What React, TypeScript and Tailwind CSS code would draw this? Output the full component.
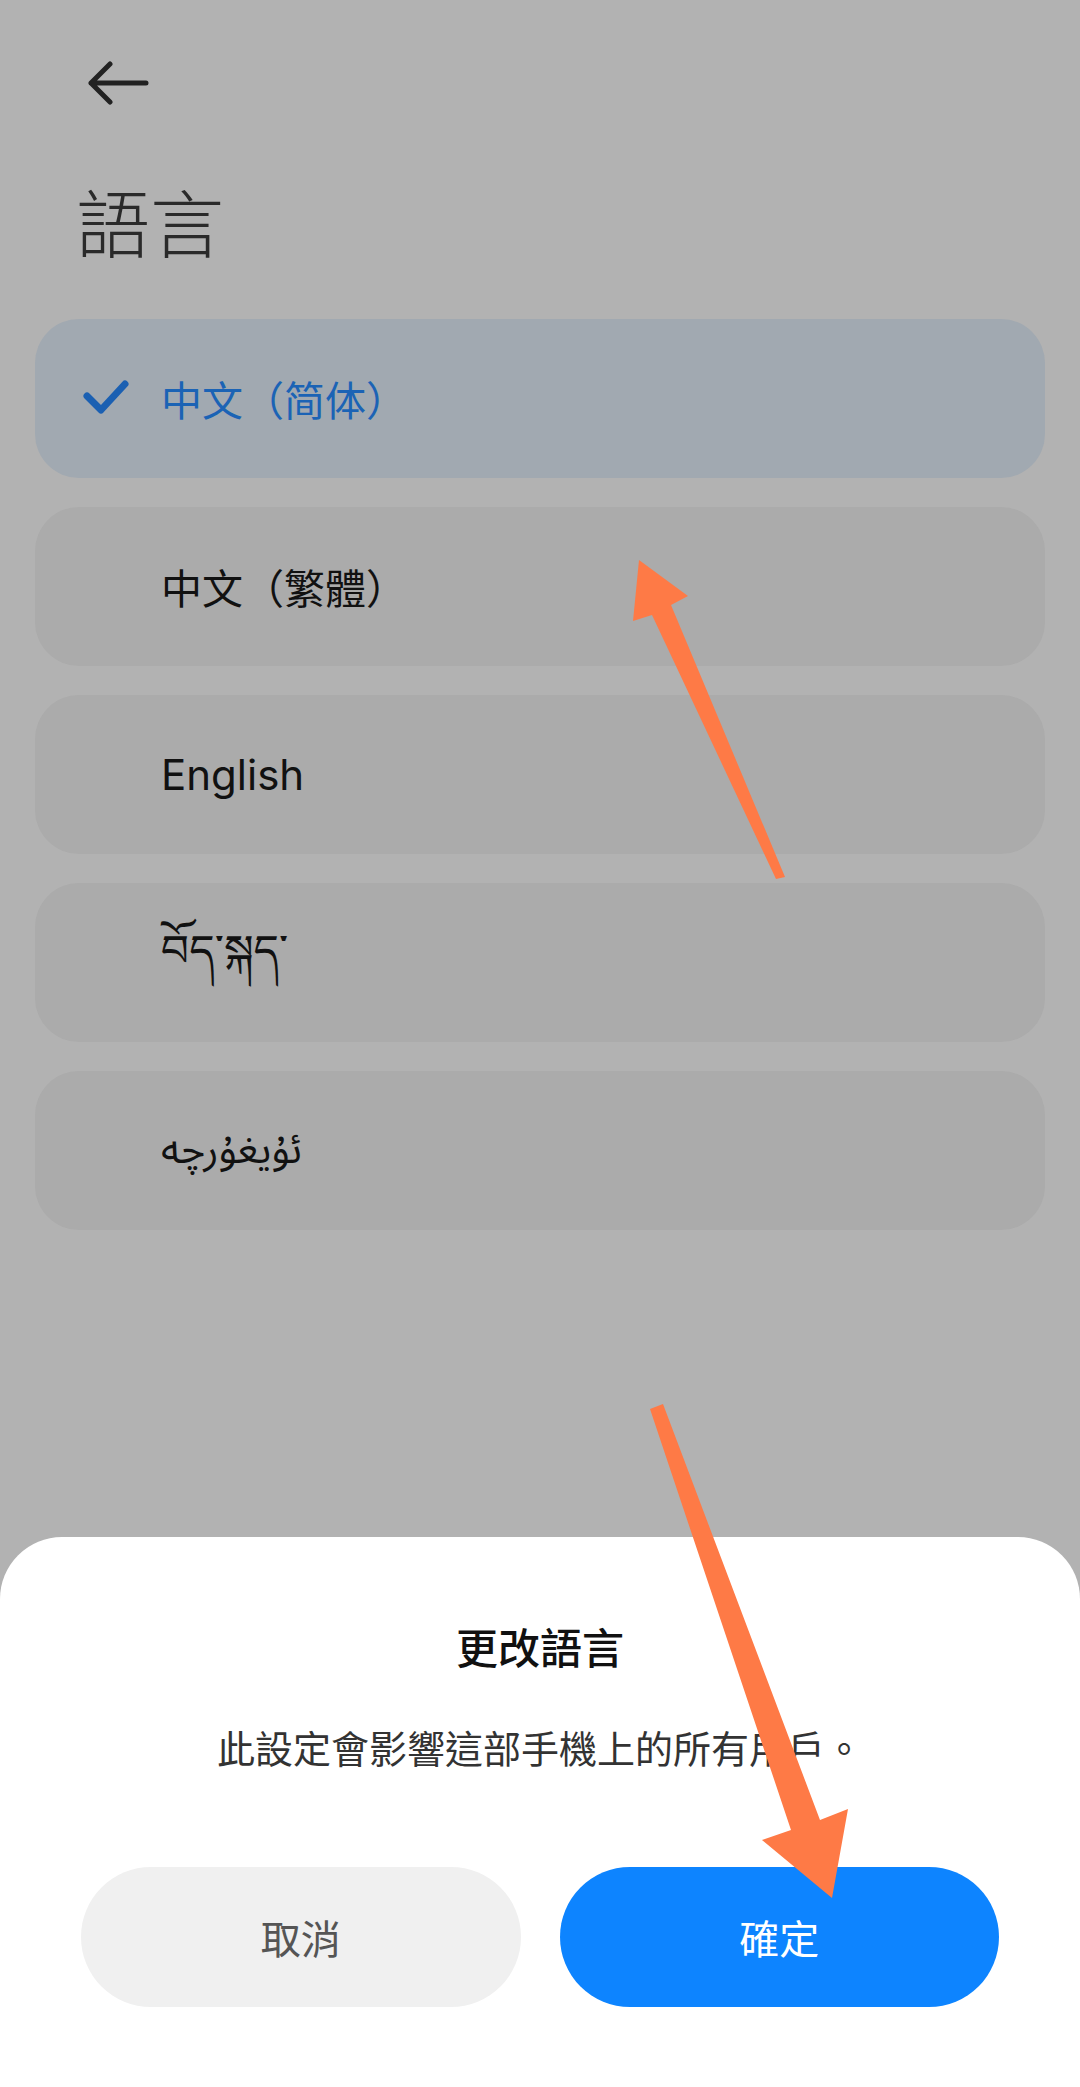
import React from "react";

const languages = [
  { label: "中文（简体）", selected: true, font: "cjk-sc" },
  { label: "中文（繁體）", selected: false, font: "cjk" },
  { label: "English", selected: false, font: "latin" },
  { label: "བོད་སྐད་", selected: false, font: "tibetan" },
  { label: "ئۇيغۇرچە", selected: false, font: "arabic" },
];

const CheckIcon = () => (
  <svg width="48" height="40" viewBox="0 0 48 40" fill="none">
    <path
      d="M4 17 L18 31 L42 5"
      stroke="#1b60b2"
      strokeWidth="7"
      strokeLinecap="round"
      strokeLinejoin="round"
    />
  </svg>
);

const BackArrow = () => (
  <svg width="64" height="48" viewBox="0 0 64 48" fill="none">
    <path
      d="M5 22 H60 M24 3 L5 22 L24 41"
      stroke="#222"
      strokeWidth="5"
      strokeLinecap="round"
      strokeLinejoin="round"
    />
  </svg>
);

const LanguageRow = ({
  label,
  selected,
  font,
}: {
  label: string;
  selected: boolean;
  font: string;
}) => {
  return (
    <div
      className={
        selected
          ? "flex h-[159px] items-center rounded-[44px] bg-[#a1a9b1]"
          : "flex h-[159px] items-center rounded-[44px] bg-[#ababab]"
      }
    >
      <div className="flex w-[126px] items-center pl-[48px]">
        {selected && <CheckIcon />}
      </div>
      {font === "cjk-sc" && (
        <span className="font-['Noto_Sans_CJK_SC',sans-serif] text-[41px] leading-none text-[#1b63b5]">
          {label}
        </span>
      )}
      {font === "cjk" && (
        <span className="font-['Noto_Sans_CJK_TC',sans-serif] text-[41px] leading-none text-[#111]">
          {label}
        </span>
      )}
      {font === "latin" && (
        <span className="font-['Inter',sans-serif] text-[42px] leading-none text-[#111]">
          {label}
        </span>
      )}
      {font === "tibetan" && (
        <span className="font-['Noto_Serif_Tibetan','Noto_Sans_Tibetan','Jomolhari','DejaVu_Sans',serif] text-[44px] leading-none text-[#111]">
          {label}
        </span>
      )}
      {font === "arabic" && (
        <span
          dir="rtl"
          className="font-['Noto_Sans_Arabic','DejaVu_Sans',sans-serif] text-[41px] leading-none text-[#111]"
        >
          {label}
        </span>
      )}
    </div>
  );
};

export default function App() {
  return (
    <div className="relative flex h-[2087px] w-full flex-col overflow-hidden bg-[#b2b2b2] font-['Noto_Sans_CJK_TC',sans-serif]">
      {/* header */}
      <div className="pl-[86px] pt-[61px]">
        <BackArrow />
      </div>
      <h1 className="mt-[74px] pl-[76px] text-[74px] font-light leading-none text-[#2a2a2a]">
        語言
      </h1>

      {/* language list */}
      <div className="mt-[62px] flex flex-col gap-[29px] px-[35px]">
        {languages.map((lang) => (
          <LanguageRow key={lang.label} {...lang} />
        ))}
      </div>

      {/* bottom sheet */}
      <div className="mt-auto flex h-[550px] flex-col items-center rounded-t-[62px] bg-white">
        <h2 className="mt-[88px] text-[42px] font-medium leading-none text-[#111]">
          更改語言
        </h2>
        <p className="mt-[61px] text-[38px] leading-none text-[#333]">
          此設定會影響這部手機上的所有用戶。
        </p>
        <div className="mt-[101px] flex w-full gap-[39px] px-[81px]">
          <button className="flex h-[140px] flex-1 items-center justify-center rounded-full bg-[#f0f0f0] text-[40px] text-[#555]">
            取消
          </button>
          <button className="flex h-[140px] flex-1 items-center justify-center rounded-full bg-[#0d84ff] text-[40px] text-white">
            確定
          </button>
        </div>
      </div>

      {/* annotation arrows */}
      <svg
        className="pointer-events-none absolute inset-0"
        width="1080"
        height="2087"
        viewBox="0 0 1080 2087"
      >
        <polygon
          points="639,560 688,596 671,605 785,877 776,879 652,615 633,621"
          fill="#fe7a46"
        />
        <polygon
          points="650,1409 663,1404 820,1820 848,1809 832,1898 762,1840 791,1830"
          fill="#fe7a46"
        />
      </svg>
    </div>
  );
}
